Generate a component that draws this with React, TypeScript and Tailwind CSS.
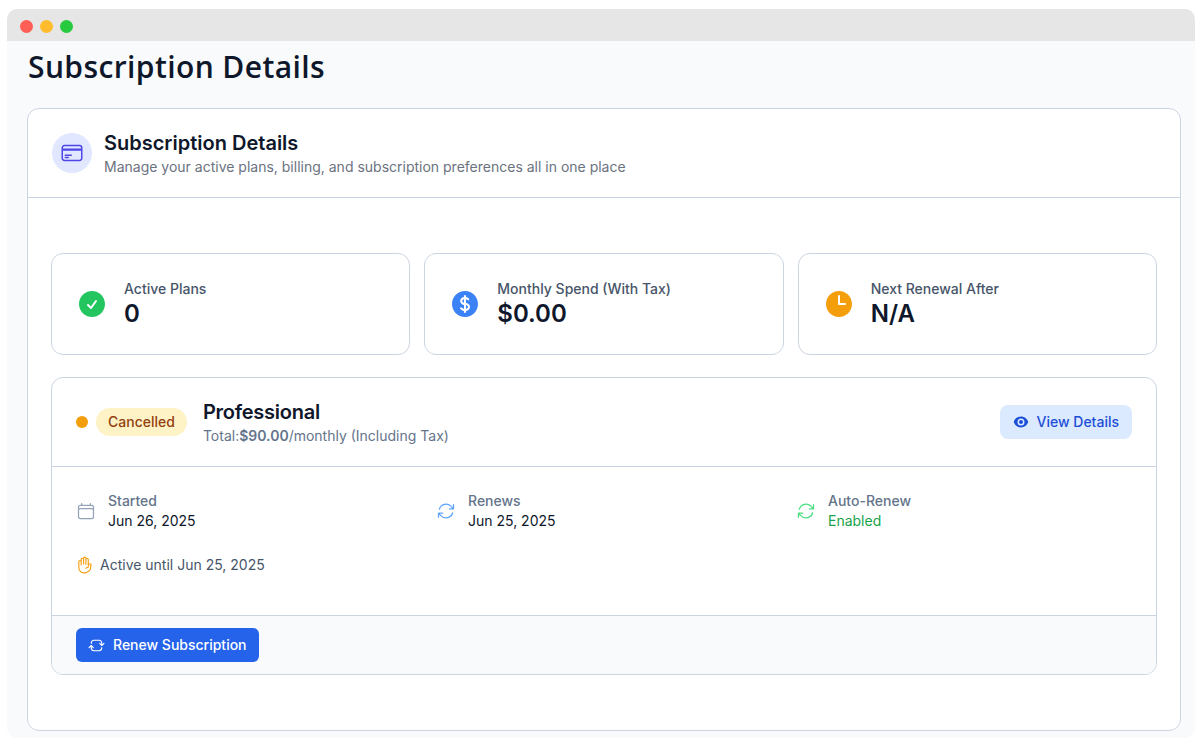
import type { ReactNode } from "react";
import {
  HiCheckCircle,
  HiClock,
  HiCurrencyDollar,
  HiEye,
  HiOutlineArrowPath,
  HiOutlineArrowPathRoundedSquare,
  HiOutlineCalendar,
  HiOutlineCreditCard,
  HiOutlineHandRaised,
} from "react-icons/hi2";

function StatCard({ icon, label, value }: { icon: ReactNode; label: string; value: string }) {
  return (
    <div className="flex h-[102px] items-center rounded-xl border border-[#cbd5e1] bg-white pl-[24px]">
      {icon}
      <div className="ml-[16px]">
        <p className="text-sm leading-[19px] font-medium text-[#475569]">{label}</p>
        <p className="text-2xl leading-8 font-semibold text-[#0f172a]">{value}</p>
      </div>
    </div>
  );
}

function DateItem({ icon, label, children }: { icon: ReactNode; label: string; children: ReactNode }) {
  return (
    <div className="flex items-center gap-[12px]">
      {icon}
      <div>
        <p className="text-sm leading-5 font-medium text-[#64748b]">{label}</p>
        {children}
      </div>
    </div>
  );
}

export default function App() {
  return (
    <div className="h-[748px] bg-white px-[7px] pt-[9px] font-['Inter',sans-serif]">
      <div className="h-[729px] overflow-hidden rounded-[10px] bg-[#f8fafc]">
        <div className="flex h-8 items-center gap-[7px] bg-[#e6e6e6] pt-0.5 pl-[13px]">
          <span className="size-[13px] rounded-full bg-[#ff5f56]" />
          <span className="size-[13px] rounded-full bg-[#ffbd2e]" />
          <span className="size-[13px] rounded-full bg-[#27c93f]" />
        </div>
        <div className="pr-[14px] pl-5">
          <h1 className="pt-[5px] pl-px text-[30px] leading-[42px] font-semibold tracking-[0.4px] text-[#0f172a] font-['Open_Sans',sans-serif]">
            Subscription Details
          </h1>
          <div className="mt-5 h-[623px] rounded-xl border border-[#cbd5e1] bg-white">
            <div className="flex h-[89px] items-center gap-3 border-b border-[#cbd5e1] pl-6">
              <div className="flex size-10 items-center justify-center rounded-full bg-[#e0e7ff]">
                <HiOutlineCreditCard className="size-6 text-[#4f46e5]" />
              </div>
              <div>
                <h2 className="text-xl leading-7 font-semibold text-[#0f172a]">Subscription Details</h2>
                <p className="text-sm leading-5 text-[#6b7280]">
                  Manage your active plans, billing, and subscription preferences all in one place
                </p>
              </div>
            </div>
            <div className="px-[23px] pt-[55px]">
              <div className="grid grid-cols-3 gap-[14px]">
                <StatCard
                  icon={<HiCheckCircle className="size-8 text-[#22c55e]" />}
                  label="Active Plans"
                  value="0"
                />
                <StatCard
                  icon={<HiCurrencyDollar className="size-8 text-[#3b82f6]" />}
                  label="Monthly Spend (With Tax)"
                  value="$0.00"
                />
                <StatCard
                  icon={<HiClock className="size-8 text-[#f59e0b]" />}
                  label="Next Renewal After"
                  value="N/A"
                />
              </div>
              <div className="mt-[22px] h-[298px] overflow-hidden rounded-xl border border-[#cbd5e1]">
                <div className="flex h-[89px] items-center border-b border-[#cbd5e1] pr-6 pl-6">
                  <span className="size-3 rounded-full bg-[#f59e0b]" />
                  <span className="ml-2 rounded-full bg-[#fef3c7] px-3 py-1 text-sm leading-5 font-medium text-[#92400e]">
                    Cancelled
                  </span>
                  <div className="ml-4">
                    <h3 className="text-xl leading-7 font-semibold tracking-[-0.25px] text-[#0f172a]">Professional</h3>
                    <p className="text-sm leading-5 text-[#64748b]">
                      Total:<span className="font-semibold">$90.00</span>/monthly (Including Tax)
                    </p>
                  </div>
                  <button className="ml-auto flex h-[34px] items-center gap-2 rounded-lg bg-[#dbeafe] pr-[13px] pl-[13px] text-sm font-medium text-[#1d4ed8]">
                    <HiEye className="size-4" />
                    View Details
                  </button>
                </div>
                <div className="h-[148px] px-6 pt-6">
                  <div className="grid grid-cols-3 gap-6">
                    <DateItem icon={<HiOutlineCalendar className="size-5 text-[#94a3b8]" />} label="Started">
                      <p className="text-sm leading-5 text-[#0f172a]">Jun 26, 2025</p>
                    </DateItem>
                    <DateItem icon={<HiOutlineArrowPath className="size-5 text-[#60a5fa]" />} label="Renews">
                      <p className="text-sm leading-5 text-[#0f172a]">Jun 25, 2025</p>
                    </DateItem>
                    <DateItem icon={<HiOutlineArrowPath className="size-5 text-[#4ade80]" />} label="Auto-Renew">
                      <p className="text-sm leading-5 text-[#16a34a]">Enabled</p>
                    </DateItem>
                  </div>
                  <div className="mt-6 flex items-center gap-1.5">
                    <HiOutlineHandRaised className="size-[18px] text-[#f59e0b]" />
                    <p className="text-sm leading-5 text-[#475569]">Active until Jun 25, 2025</p>
                  </div>
                </div>
                <div className="flex h-[59px] items-center border-t border-[#cbd5e1] bg-[#f8fafc] pl-6">
                  <button className="flex h-[34px] items-center gap-2 rounded-md bg-[#2563eb] pr-3 pl-3 text-sm font-medium text-white">
                    <HiOutlineArrowPathRoundedSquare className="size-[17px]" />
                    Renew Subscription
                  </button>
                </div>
              </div>
            </div>
          </div>
        </div>
      </div>
    </div>
  );
}
